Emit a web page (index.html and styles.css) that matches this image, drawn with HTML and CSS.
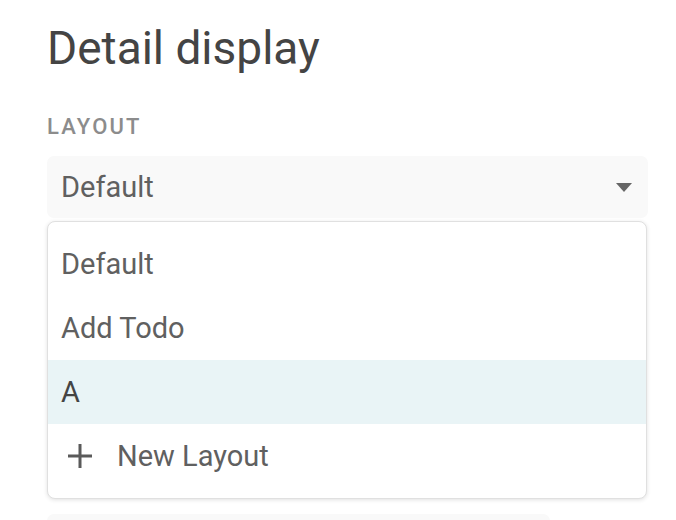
FILE: index.html
```html
<!DOCTYPE html>
<html>
<head>
<meta charset="utf-8">
<link rel="stylesheet" href="styles.css">
</head>
<body>
<div class="page">
  <h1 class="title">Detail display</h1>
  <div class="label">LAYOUT</div>
  <div class="select">
    <span class="select-value">Default</span>
    <svg class="caret" width="16" height="9" viewBox="0 0 16 9"><path d="M0 0H16L8 9Z" fill="#666"/></svg>
  </div>
  <div class="menu">
    <div class="item">Default</div>
    <div class="item">Add Todo</div>
    <div class="item active">A</div>
    <div class="item new">
      <svg class="plus" width="24" height="24" viewBox="0 0 24 24"><path d="M12 0V24M0 12H24" stroke="#5a5a5a" stroke-width="3" fill="none"/></svg>
      <span>New Layout</span>
    </div>
  </div>
  <div class="next-field"></div>
</div>
</body>
</html>
```
FILE: styles.css
```css
html, body {
  margin: 0;
  padding: 0;
  background: #fff;
}
body {
  font-family: Roboto, "Liberation Sans", sans-serif;
  width: 676px;
  height: 520px;
  overflow: hidden;
}
.page {
  padding-left: 47px;
  display: flex;
  flex-direction: column;
  align-items: flex-start;
}
.title {
  margin: 21px 0 0 0;
  font-size: 46px;
  line-height: 54px;
  font-weight: 400;
  color: #444;
}
.label {
  margin-top: 39px;
  font-size: 22px;
  line-height: 26px;
  font-weight: 500;
  color: #8c8c8c;
  letter-spacing: 2.2px;
}
.select {
  margin-top: 16px;
  width: 601px;
  height: 62px;
  box-sizing: border-box;
  background: #f9f9f9;
  border-radius: 7px;
  padding: 0 16px 0 14px;
  display: flex;
  align-items: center;
  justify-content: space-between;
}
.select-value {
  font-size: 29px;
  color: #606060;
}
.caret {
  display: block;
}
.menu {
  margin-top: 3px;
  width: 600px;
  box-sizing: border-box;
  background: #fff;
  border: 1px solid #e0e0e0;
  border-radius: 8px;
  box-shadow: 0 1px 4px rgba(0, 0, 0, 0.12);
  padding: 10px 0;
}
.item {
  height: 64px;
  display: flex;
  align-items: center;
  padding-left: 13px;
  font-size: 29px;
  color: #606060;
}
.item.active {
  background: #e9f4f6;
  color: #444;
}
.item.new {
  padding-left: 20px;
  gap: 25px;
}
.plus {
  display: block;
}
.next-field {
  margin-top: 15px;
  width: 503px;
  height: 7px;
  background: #f9f9f9;
  border-radius: 7px 7px 0 0;
}
```
